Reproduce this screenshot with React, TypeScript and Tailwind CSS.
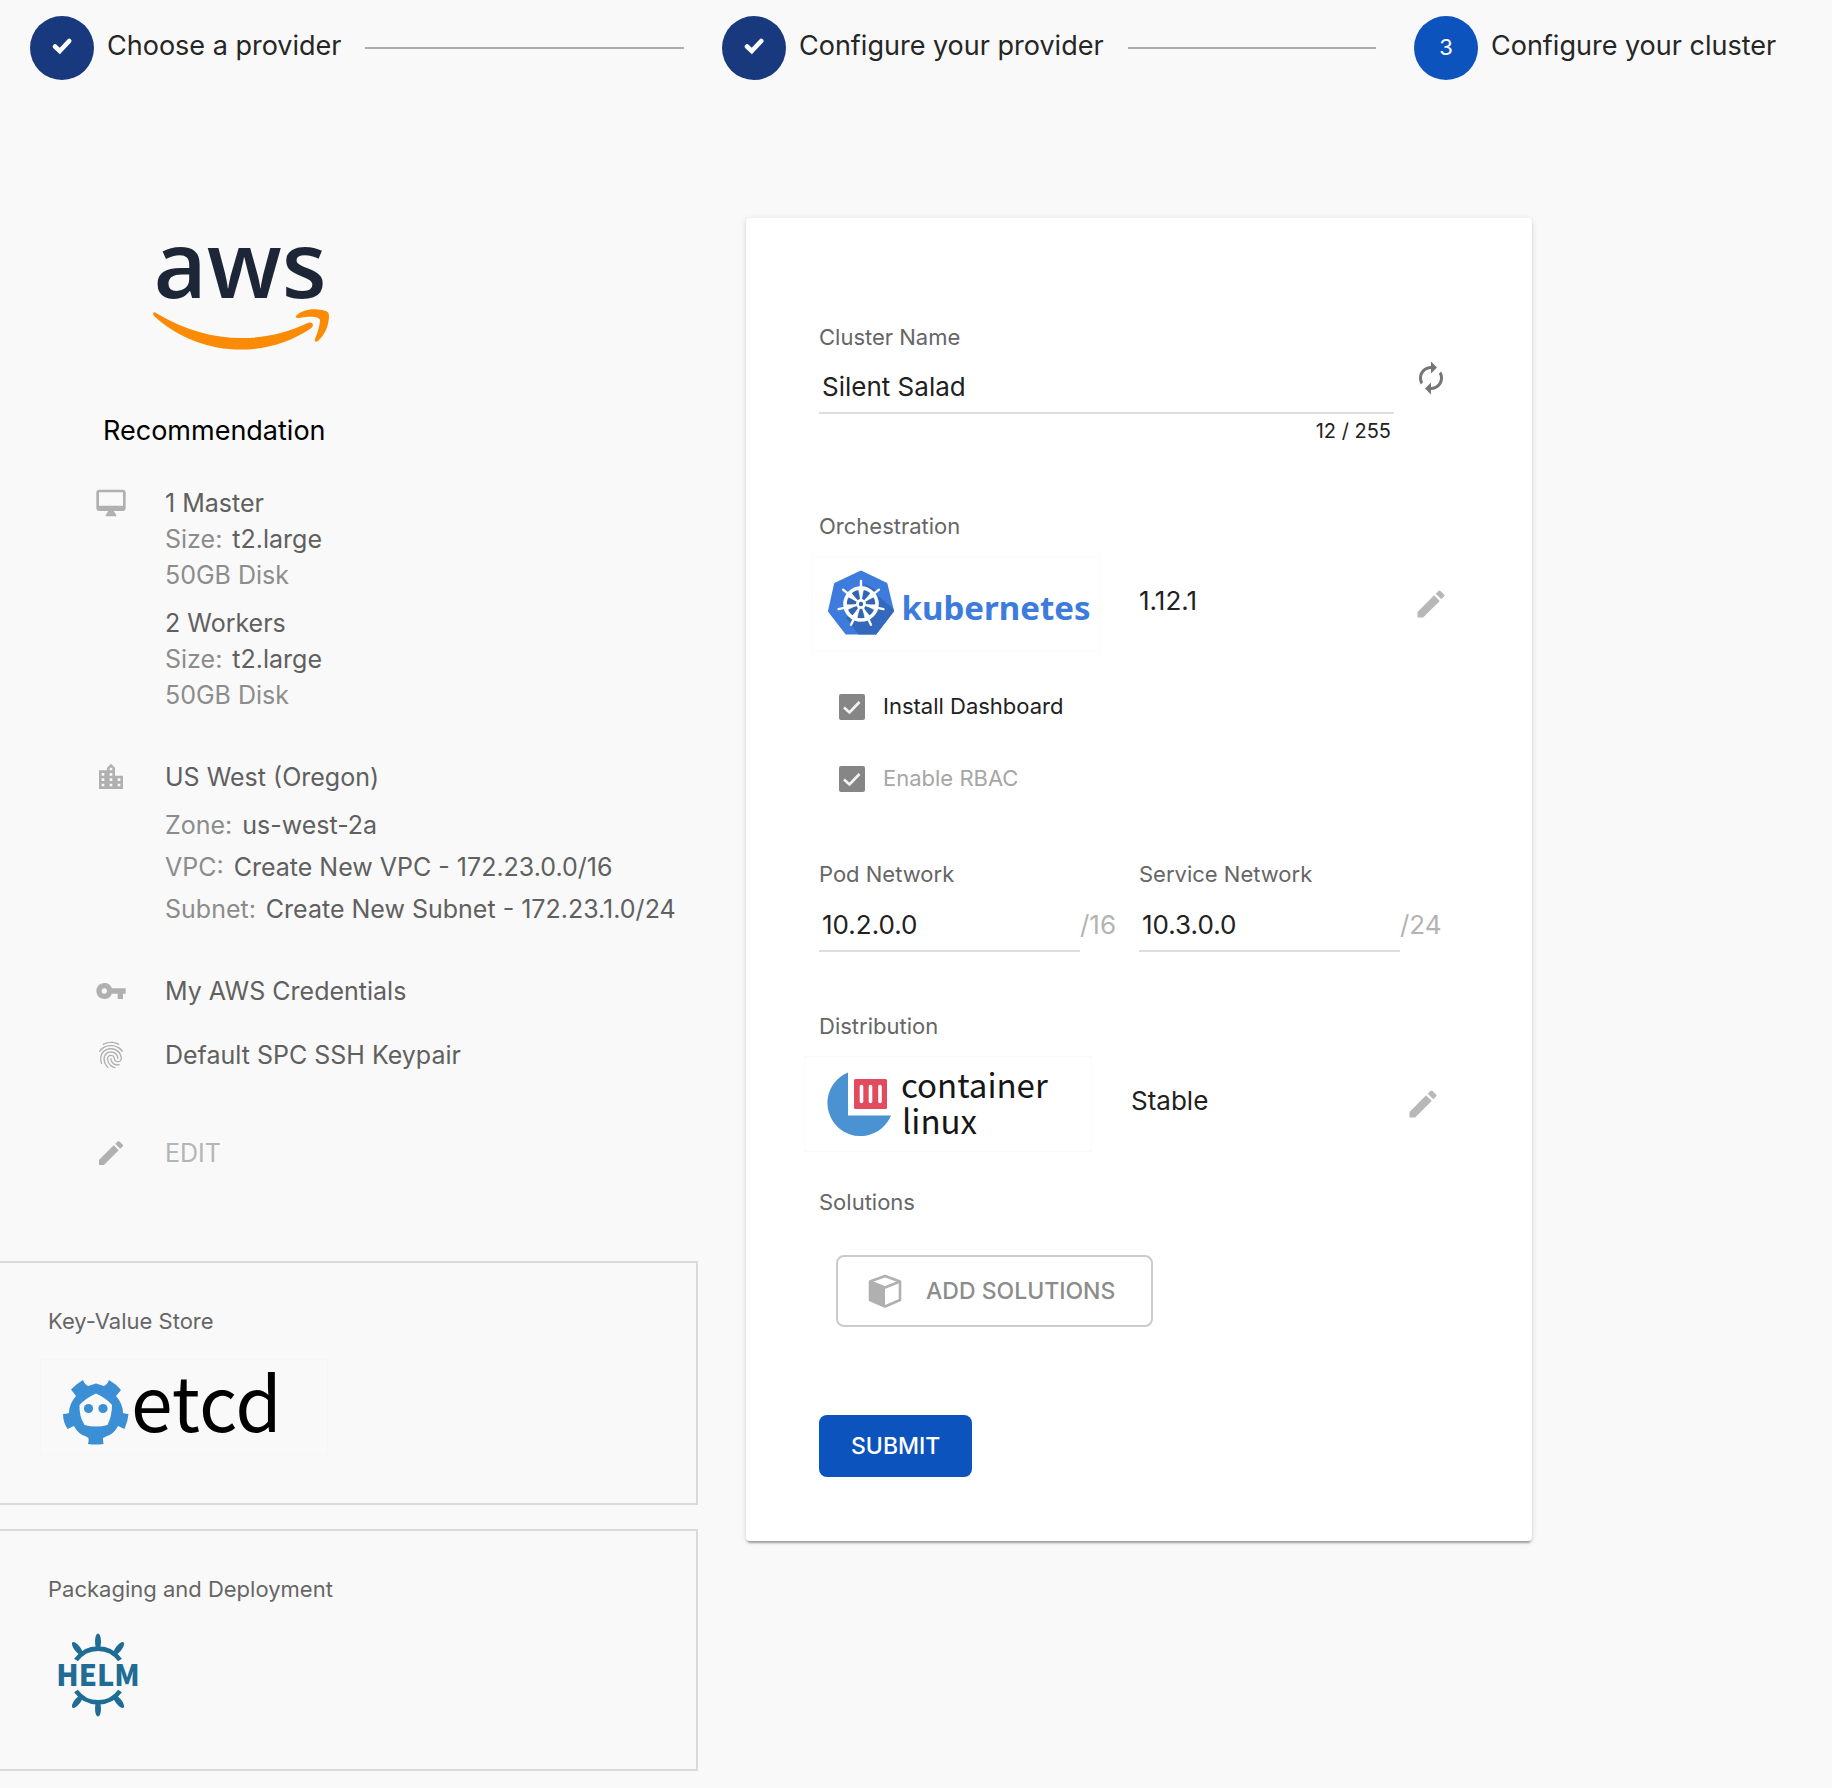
import React, { useState } from 'react';
import { MdAutorenew, MdEdit, MdFingerprint, MdLocationCity, MdVpnKey } from 'react-icons/md';

const CJK = '"Noto Sans CJK SC", "Open Sans", sans-serif';

function StepCheck() {
  return (
    <svg viewBox="0 0 24 24" className="size-6" aria-hidden="true">
      <path
        d="M5 11.500 9.800 16 19.200 6"
        fill="none"
        stroke="#fff"
        strokeWidth="4.600"
        strokeLinejoin="miter"
        strokeLinecap="round"
      />
    </svg>
  );
}

function Step({ label, index, done, last }: { label: string; index: number; done?: boolean; last?: boolean }) {
  return (
    <li className={last ? 'flex w-[418px] shrink-0 items-center' : 'flex min-w-0 flex-1 items-center'}>
      <span
        className={
          'flex size-16 shrink-0 items-center justify-center rounded-full pb-0.5 text-[22px] text-white ' +
          (done ? 'bg-[#19397f]' : 'bg-[#0d53bd]')
        }
      >
        {done ? <StepCheck /> : index}
      </span>
      <span className="ml-[13px] whitespace-nowrap pb-1 text-[27px] leading-9 text-[#262626]">{label}</span>
      {!last && <span className="ml-6 mr-[38px] h-0.5 flex-1 bg-[#adadad]" />}
    </li>
  );
}

function AwsLogo() {
  return (
    <svg
      viewBox="0 0 178 106"
      className="ml-[152px] mt-[27px] h-[106px] w-[178px] overflow-visible"
      role="img"
      aria-label="aws"
    >
      <text x="88" y="53" textAnchor="middle" fontSize="92" fontWeight="600" fill="#1d2636" fontFamily='"Open Sans", sans-serif'>
        aws
      </text>
      <path
        d="M4 68 C56 99 108 100 156 78 C161 76 163 81 158 84 C110 116 44 110 2 71 C0 68 2 66 4 68Z"
        fill="#fb8a05"
      />
      <path
        d="M144 71 C149 65 160 63 170 65 C175 66 177 67 177 71 C177 80 173 90 166 96 C164 97 162 97 163 94 C166 87 168 79 168 75 C167 71 157 71 147 73 C144 73 143 72 144 71Z"
        fill="#fb8a05"
      />
    </svg>
  );
}

function KubernetesLogo() {
  const spokes = [0, 1, 2, 3, 4, 5, 6].map((i) => (i * 360) / 7);
  return (
    <svg viewBox="0 0 288 96" className="h-24 w-72" role="img" aria-label="kubernetes">
      <defs>
        <clipPath id="hept">
          <path d="M49 15 L75 27.500 L82 55 L64 78.500 L34 78.500 L16 55 L22.500 27.500Z" />
        </clipPath>
      </defs>
      <rect x="0.500" y="0.500" width="287" height="95" fill="none" stroke="#fafafa" />
      <path
        d="M49 16 L74 28 L80.500 55 L63.500 77 L34.500 77 L17.500 55 L23.500 28Z"
        fill="#3d7bdc"
        stroke="#3d7bdc"
        strokeWidth="3"
        strokeLinejoin="round"
      />
      <g clipPath="url(#hept)">
        <path d="M49 26 L90 60 L82 96 L60 96 L34 62 L64 34Z" fill="#3468bd" />
      </g>
      <circle cx="49" cy="48" r="14" fill="#3264b3" />
      <g stroke="#fff" fill="none">
        <circle cx="49" cy="48" r="16" strokeWidth="3.600" />
        {spokes.map((a) => (
          <g key={a} transform={`rotate(${a} 49 48)`}>
            <path d="M49 42 V25" strokeWidth="2.400" strokeLinecap="round" />
            <path d="M49 44.500 L46.300 33 H51.700Z" strokeWidth="0.500" fill="#fff" />
          </g>
        ))}
      </g>
      <circle cx="49" cy="48" r="5" fill="#fff" />
      <circle cx="49" cy="48" r="2.200" fill="#3264b3" />
      <text x="184" y="64" textAnchor="middle" fontSize="33" fontWeight="700" fill="#3d7bdc" fontFamily='"Noto Sans", sans-serif'>
        kubernetes
      </text>
    </svg>
  );
}

function ContainerLinuxLogo() {
  return (
    <svg viewBox="0 0 288 96" className="h-24 w-72" role="img" aria-label="container linux">
      <rect x="0.500" y="0.500" width="287" height="95" fill="none" stroke="#fafafa" />
      <g transform="translate(-1 1)">
        <path d="M45 15.500 A33 33 0 1 0 88 58.500 H45Z" fill="#4a92d2" />
        <rect x="51" y="22" width="33" height="30" rx="1.500" fill="#e24a5e" />
        <g stroke="#fff" strokeWidth="3.600" strokeLinecap="round">
          <path d="M58.500 29.500 V44.500" />
          <path d="M67.500 29.500 V44.500" />
          <path d="M77 29.500 V44.500" />
        </g>
      </g>
      <g fill="#161616" fontSize="33" fontFamily={CJK}>
        <text x="97" y="42">container</text>
        <text x="98" y="78">linux</text>
      </g>
    </svg>
  );
}

function EtcdLogo() {
  return (
    <svg viewBox="0 0 288 96" className="-ml-2 h-24 w-72 overflow-visible" role="img" aria-label="etcd">
      <rect x="0.500" y="0.500" width="287" height="95" fill="none" stroke="#f6f6f6" />
      <path
        d="M43 21 Q45 26 48 27 L56 24.500 L64 27 Q67 26 69 21 Q76 25 81 31 L76 37 Q83 45 83 54 Q86 55 88.500 55 Q88 62 84.500 70 L78 67 Q74 75 66 77.500 L63 79 Q63 82 63.500 85 Q56 86 48 85 Q49 82 48.500 79 L46 77.500 Q38 75 34 67 L27.500 70 Q23 63 23 55 Q27 55 29 54 Q29 45 36 37 L31 30.500 Q36 25 43 21Z"
        fill="#3b8fd4"
      />
      <path d="M56 34.500 Q66 39 72 46 Q72 57 67.500 66 Q56 69 44.500 66 Q39 57 39.500 46 Q46 39 56 34.500Z" fill="#f9f9f9" />
      <circle cx="48.500" cy="49.500" r="4.600" fill="#3b8fd4" />
      <circle cx="63" cy="49.500" r="4.600" fill="#3b8fd4" />
      <text x="91" y="73" fontSize="75" fill="#000" fontFamily={CJK}>
        etcd
      </text>
    </svg>
  );
}

function HelmLogo() {
  return (
    <svg viewBox="0 0 96 96" className="size-24" role="img" aria-label="HELM">
      <g fill="none" stroke="#1f6c94" strokeWidth="4.600">
        <path d="M28 33 A27 27 0 0 1 72 33" />
        <path d="M28 64 A27 27 0 0 0 72 64" />
      </g>
      <g fill="#1f6c94">
        {[0, 38, -38, 180, 142, -142].map((a) => (
          <ellipse key={a} cx="50" cy="14.500" rx="3" ry="8" transform={`rotate(${a} 50 48)`} />
        ))}
        <text x="50" y="59" textAnchor="middle" fontSize="29" fontWeight="800" fontFamily={CJK}>
          HELM
        </text>
      </g>
    </svg>
  );
}

function DesktopIcon() {
  return (
    <svg viewBox="0 0 24 24" className="size-8" fill="currentColor" aria-hidden="true">
      <path d="M21 2H3c-1.100 0-2 .9-2 2v12c0 1.100.9 2 2 2h7l-2 3v1h8v-1l-2-3h7c1.100 0 2-.9 2-2V4c0-1.100-.9-2-2-2zm0 12H3V4h18v10z" />
    </svg>
  );
}

function CubeIcon() {
  return (
    <svg viewBox="0 0 34 34" className="size-[34px] shrink-0" aria-hidden="true">
      <g fill="none" stroke="#b0b0b0" strokeWidth="2.600" strokeLinejoin="round">
        <path d="M17 2 L32 7.500 V26 L17 32.500 L2 26 V7.500Z" />
        <path d="M2 7.500 L17 13.500 L32 7.500" />
      </g>
      <path d="M2 7.500 L17 13.500 V32.500 L2 26Z" fill="#b0b0b0" />
    </svg>
  );
}

function InfoRow({ icon, className, children }: { icon: React.ReactNode; className: string; children: React.ReactNode }) {
  return (
    <div className={'flex items-start ' + className}>
      <span className="mr-[38px] flex h-9 w-8 shrink-0 items-center text-[32px] text-[#b0b0b0]">{icon}</span>
      <div className="min-w-0">{children}</div>
    </div>
  );
}

function Pair({ name, value, tall }: { name: string; value: string; tall?: boolean }) {
  return (
    <p className={tall ? 'leading-[42px]' : 'leading-9'}>
      <span className="mr-2.5 text-[#8c8c8c]">{name}:</span>
      {value}
    </p>
  );
}

function NodeGroup({ title, className }: { title: string; className?: string }) {
  return (
    <div className={className}>
      <p>{title}</p>
      <Pair name="Size" value="t2.large" />
      <p className="text-[#8c8c8c]">50GB Disk</p>
    </div>
  );
}

function CheckRow({ id, label, muted, className }: { id: string; label: string; muted?: boolean; className: string }) {
  const [on, setOn] = useState(true);
  return (
    <div className={'ml-5 flex h-7 items-center ' + className}>
      <span className="relative flex size-[26px] shrink-0">
        <input
          id={id}
          type="checkbox"
          checked={on}
          onChange={() => setOn(!on)}
          className="size-[26px] appearance-none rounded-[2px] bg-[#868686]"
        />
        {on && (
          <svg viewBox="0 0 26 26" className="pointer-events-none absolute inset-0 size-[26px]" aria-hidden="true">
            <path d="M5 13.500 L10.500 18.500 L20.500 8" fill="none" stroke="#f4f4f4" strokeWidth="2.600" />
          </svg>
        )}
      </span>
      <label htmlFor={id} className={'ml-[18px] pb-0.5 text-[22px] leading-7 ' + (muted ? 'text-[#a6a6a6]' : 'text-[#212121]')}>
        {label}
      </label>
    </div>
  );
}

function NetworkField({ id, label, value, suffix }: { id: string; label: string; value: string; suffix: string }) {
  return (
    <div>
      <label htmlFor={id} className="block text-[22px] leading-7 text-[#666]">
        {label}
      </label>
      <div className="mt-2.5 flex items-center">
        <input
          id={id}
          defaultValue={value}
          className="h-[54px] min-w-0 flex-1 border-b-2 border-[#dedede] bg-transparent pl-[3px] text-[26px] text-[#212121] outline-none"
        />
        <span className="w-[59px] shrink-0 pb-0.5 text-[26px] text-[#b3b3b3]">{suffix}</span>
      </div>
    </div>
  );
}

function Choice({ logo, value, label }: { logo: React.ReactNode; value: string; label: string }) {
  return (
    <div className="mt-4 grid grid-cols-2 items-center">
      <div className="-ml-[7px]">{logo}</div>
      <div className="flex items-center justify-between pr-2.5">
        <span className="pb-1.5 text-[26px] leading-9 text-[#212121]">{value}</span>
        <button type="button" aria-label={label} className="text-[36px] text-[#b8b8b8]">
          <MdEdit />
        </button>
      </div>
    </div>
  );
}

export default function App() {
  const [name, setName] = useState('Silent Salad');
  return (
    <div className="min-h-screen bg-[#f9f9f9] pb-4 font-['Inter',sans-serif]">
      <ol className="flex pl-[30px] pt-4">
        <Step index={1} label="Choose a provider" done />
        <Step index={2} label="Configure your provider" done />
        <Step index={3} label="Configure your cluster" last />
      </ol>

      <main className="mt-[138px] grid grid-cols-[698fr_786fr_252fr] items-start gap-12">
        <div className="min-w-0">
          <AwsLogo />
          <h2 className="ml-[103px] mt-[62px] text-[27px] leading-9 text-black">Recommendation</h2>
          <div className="ml-[95px] mt-9 whitespace-nowrap text-[25px] leading-9 text-[#606060]">
            <InfoRow icon={<DesktopIcon />} className="">
              <NodeGroup title="1 Master" />
              <NodeGroup title="2 Workers" className="mt-3" />
            </InfoRow>
            <InfoRow icon={<MdLocationCity />} className="mt-[46px]">
              <p className="mb-[9px]">US West (Oregon)</p>
              <Pair name="Zone" value="us-west-2a" tall />
              <Pair name="VPC" value="Create New VPC - 172.23.0.0/16" tall />
              <Pair name="Subnet" value="Create New Subnet - 172.23.1.0/24" tall />
            </InfoRow>
            <InfoRow icon={<MdVpnKey />} className="mt-[43px]">
              My AWS Credentials
            </InfoRow>
            <InfoRow icon={<MdFingerprint />} className="mt-7">
              Default SPC SSH Keypair
            </InfoRow>
            <InfoRow icon={<MdEdit />} className="mt-[62px]">
              <button type="button" className="block text-[#b5b5b5]">
                EDIT
              </button>
            </InfoRow>
          </div>

          <section className="mt-[90px] border-2 border-l-0 border-[#dadada] pb-12 pl-12 pt-11">
            <h3 className="mb-6 text-[22px] leading-7 text-[#666]">Key-Value Store</h3>
            <EtcdLogo />
          </section>
          <section className="mt-6 border-2 border-l-0 border-[#dadada] pb-[46px] pl-12 pt-11">
            <h3 className="mb-6 text-[22px] leading-7 text-[#666]">Packaging and Deployment</h3>
            <HelmLogo />
          </section>
        </div>

        <form
          onSubmit={(e) => e.preventDefault()}
          className="min-w-0 rounded bg-white px-[73px] pb-16 pt-[105px] shadow-[0_4px_2px_-2px_rgba(0,0,0,0.2),0_2px_2px_rgba(0,0,0,0.14),0_1px_6px_rgba(0,0,0,0.12)]"
        >
          <label htmlFor="cluster" className="block text-[22px] leading-7 text-[#666]">
            Cluster Name
          </label>
          <div className="mt-[9px] flex items-start pr-2.5">
            <div className="min-w-0 flex-1">
              <input
                id="cluster"
                value={name}
                maxLength={255}
                onChange={(e) => setName(e.target.value)}
                className="block h-[54px] w-full border-b-2 border-[#dedede] bg-transparent pl-[3px] text-[26px] text-[#212121] outline-none"
              />
              <p className="mt-[5px] pr-[3px] text-right text-[20px] leading-6 text-[#212121]">{name.length} / 255</p>
            </div>
            <button type="button" aria-label="Generate a new name" className="ml-[19px] text-[36px] text-[#757575]">
              <MdAutorenew />
            </button>
          </div>

          <h3 className="mt-[69px] text-[22px] leading-7 text-[#666]">Orchestration</h3>
          <Choice logo={<KubernetesLogo />} value="1.12.1" label="Edit orchestration" />

          <CheckRow id="dashboard" label="Install Dashboard" className="mt-[41px]" />
          <CheckRow id="rbac" label="Enable RBAC" muted className="mt-11" />

          <div className="mt-[67px] grid grid-cols-2">
            <NetworkField id="pod" label="Pod Network" value="10.2.0.0" suffix="/16" />
            <NetworkField id="service" label="Service Network" value="10.3.0.0" suffix="/24" />
          </div>

          <h3 className="mt-[60px] text-[22px] leading-7 text-[#666]">Distribution</h3>
          <div className="-ml-2 mr-2">
            <Choice logo={<ContainerLinuxLogo />} value="Stable" label="Edit distribution" />
          </div>

          <h3 className="mt-9 text-[22px] leading-7 text-[#666]">Solutions</h3>
          <button
            type="button"
            className="ml-[17px] mt-[39px] flex h-[72px] items-center gap-6 rounded-lg border-2 border-[#cbcbcb] pl-[30px] pr-9 text-[23px] font-medium text-[#8c8c8c]"
          >
            <CubeIcon />
            ADD SOLUTIONS
          </button>

          <button
            type="submit"
            className="mt-[88px] block h-[62px] rounded-lg bg-[#0d53bd] px-8 text-[23px] font-medium text-white"
          >
            SUBMIT
          </button>
        </form>
      </main>
    </div>
  );
}
